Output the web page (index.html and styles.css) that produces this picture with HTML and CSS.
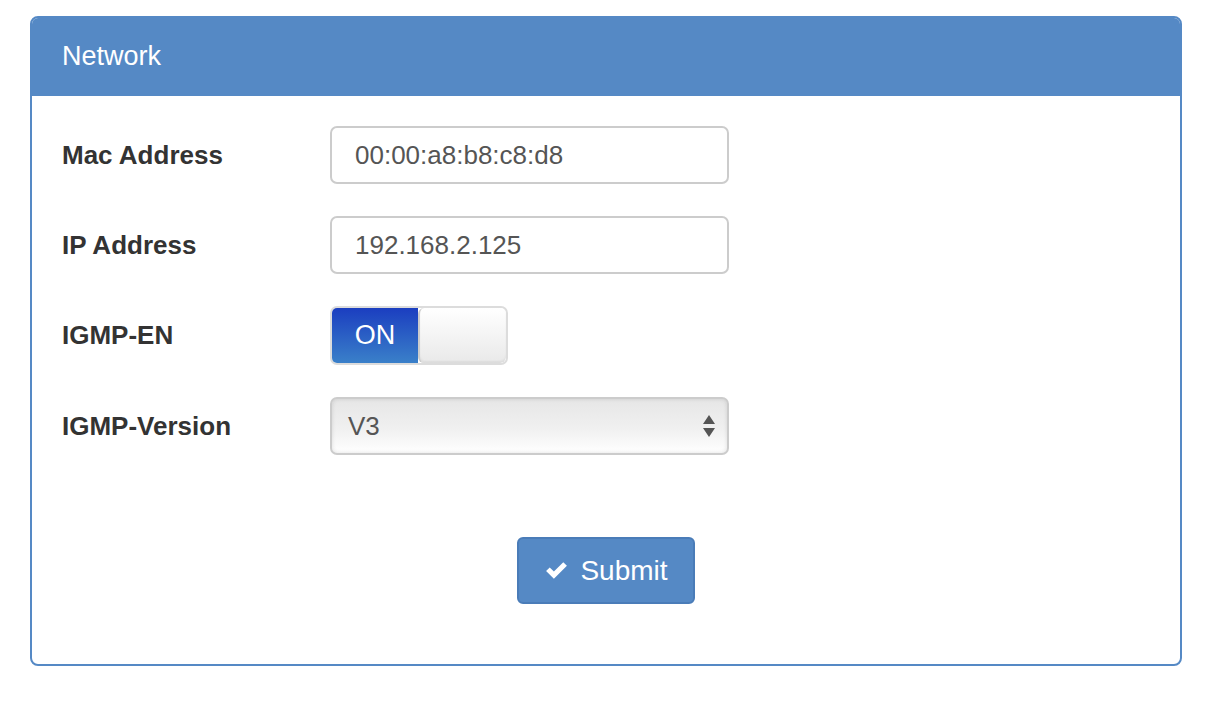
FILE: index.html
```html
<!DOCTYPE html>
<html>
<head>
<meta charset="utf-8">
<link rel="stylesheet" href="styles.css">
</head>
<body>
<div class="panel">
  <div class="panel-heading">Network</div>
  <div class="panel-body">
    <div class="row">
      <label class="lbl">Mac Address</label>
      <div class="input">00:00:a8:b8:c8:d8</div>
    </div>
    <div class="row">
      <label class="lbl">IP Address</label>
      <div class="input">192.168.2.125</div>
    </div>
    <div class="row">
      <label class="lbl">IGMP-EN</label>
      <div class="toggle">
        <div class="toggle-on">ON</div>
        <div class="toggle-handle"></div>
      </div>
    </div>
    <div class="row">
      <label class="lbl">IGMP-Version</label>
      <div class="select">
        <span>V3</span>
        <svg class="arrows" width="12" height="24" viewBox="0 0 12 24"><path d="M6 1 L12 10 L0 10 Z M0 14 L12 14 L6 23 Z" fill="#555"/></svg>
      </div>
    </div>
    <div class="actions">
      <button class="btn">
        <svg class="check" width="25" height="21" viewBox="0 0 24 20"><path d="M2 10.5 L5.5 7 L9.5 11 L18.5 2 L22 5.5 L9.5 18 Z" fill="#fff"/></svg>
        <span>Submit</span>
      </button>
    </div>
  </div>
</div>
</body>
</html>
```
FILE: styles.css
```css
html, body {
  margin: 0;
  padding: 0;
  background: #fff;
  font-family: "Liberation Sans", Arial, sans-serif;
}
body {
  padding: 16px 32px 0 30px;
}
.panel {
  border: 2px solid #5589c5;
  border-radius: 8px;
  background: #fff;
  overflow: hidden;
}
.panel-heading {
  background: #5589c5;
  color: #fff;
  font-size: 27px;
  height: 78px;
  line-height: 76px;
  padding-left: 30px;
}
.panel-body {
  padding: 30px 30px 60px 30px;
}
.row {
  display: flex;
  align-items: center;
  margin-bottom: 32px;
}
.lbl {
  width: 268px;
  font-size: 26px;
  font-weight: bold;
  color: #333;
}
.input {
  box-sizing: border-box;
  width: 399px;
  height: 58px;
  border: 2px solid #ccc;
  border-radius: 7px;
  padding-left: 23px;
  font-size: 26px;
  line-height: 54px;
  color: #555;
}
.toggle {
  box-sizing: border-box;
  width: 178px;
  height: 59px;
  border: 2px solid #dcdcdc;
  border-radius: 7px;
  display: flex;
  overflow: hidden;
}
.toggle-on {
  width: 86px;
  background: linear-gradient(#1b3ec0, #3a80c9);
  color: #fff;
  font-size: 27px;
  display: flex;
  align-items: center;
  justify-content: center;
}
.toggle-handle {
  flex: 1;
  background: linear-gradient(#fff, #e9e9e9);
  border-left: 2px solid #ccc;
  border-radius: 6px;
  box-shadow: inset 0 -2px 2px rgba(0,0,0,0.06);
}
.select {
  box-sizing: border-box;
  width: 399px;
  height: 58px;
  border: 2px solid #ccc;
  border-radius: 7px;
  background: linear-gradient(#e6e6e6, #f0f0f0 55%, #fff);
  box-shadow: inset 0 0 4px rgba(0,0,0,0.12);
  display: flex;
  align-items: center;
  justify-content: space-between;
  padding: 0 12px 0 16px;
  font-size: 26px;
  color: #555;
}
.arrows {
  display: block;
}
.actions {
  display: flex;
  justify-content: center;
  padding-top: 50px;
}
.btn {
  box-sizing: border-box;
  width: 178px;
  height: 67px;
  border: 2px solid #4a7cb8;
  border-radius: 6px;
  background: #5589c5;
  color: #fff;
  font-family: "Liberation Sans", Arial, sans-serif;
  font-size: 28px;
  display: flex;
  align-items: center;
  justify-content: center;
  gap: 11px;
  padding: 0;
}
.check {
  display: block;
}
```
